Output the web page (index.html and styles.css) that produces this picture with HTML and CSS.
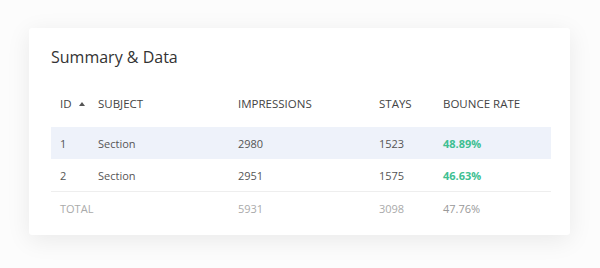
FILE: index.html
```html
<!DOCTYPE html>
<html>
<head>
<meta charset="utf-8">
<link rel="stylesheet" href="styles.css">
</head>
<body>
<div class="card">
  <h1 class="title">Summary &amp; Data</h1>
  <div class="table">
    <div class="row head">
      <div class="cell id">ID <svg class="sort" width="6" height="4" viewBox="0 0 6 4"><polygon points="3,0 6,4 0,4" fill="#555"/></svg></div>
      <div class="cell">SUBJECT</div>
      <div class="cell">IMPRESSIONS</div>
      <div class="cell">STAYS</div>
      <div class="cell">BOUNCE RATE</div>
    </div>
    <div class="row body active">
      <div class="cell">1</div>
      <div class="cell">Section</div>
      <div class="cell">2980</div>
      <div class="cell">1523</div>
      <div class="cell rate">48.89%</div>
    </div>
    <div class="row body bordered">
      <div class="cell">2</div>
      <div class="cell">Section</div>
      <div class="cell">2951</div>
      <div class="cell">1575</div>
      <div class="cell rate">46.63%</div>
    </div>
    <div class="row total">
      <div class="cell">TOTAL</div>
      <div class="cell"></div>
      <div class="cell">5931</div>
      <div class="cell">3098</div>
      <div class="cell total-rate">47.76%</div>
    </div>
  </div>
</div>
</body>
</html>
```
FILE: styles.css
```css
html, body {
  margin: 0;
  padding: 0;
}
html {
  background: #fcfcfc;
}
body {
  min-height: 268px;
  box-sizing: border-box;
  font-family: "Open Sans", "Liberation Sans", sans-serif;
  padding: 28px 30px 0 29px;
}
.card {
  width: 541px;
  height: 207px;
  box-sizing: border-box;
  background: #fff;
  border-radius: 3px;
  box-shadow: 0 5px 24px rgba(0, 0, 0, 0.08);
  padding: 17px 19px 0 22px;
}
.title {
  margin: 0;
  font-size: 16px;
  line-height: 24px;
  font-weight: 400;
  color: #333;
}
.table {
  margin-top: 18px;
}
.row {
  display: grid;
  grid-template-columns: 38px 140px 141px 64px 1fr;
  padding-left: 9px;
  height: 32px;
  align-items: center;
}
.head {
  font-size: 11.5px;
  color: #444;
  margin-bottom: 8px;
}
.body {
  font-size: 11px;
  color: #555;
}
.active {
  background: #eef2fa;
}
.bordered {
  height: 33px;
  box-sizing: border-box;
  border-bottom: 1px solid #eeeeee;
}
.sort {
  margin-left: 4px;
  vertical-align: 2px;
}
.rate {
  color: #3ebf92;
  font-weight: 700;
}
.total {
  font-size: 11px;
  color: #aaa;
}
.total-rate {
  color: #999;
}
```
